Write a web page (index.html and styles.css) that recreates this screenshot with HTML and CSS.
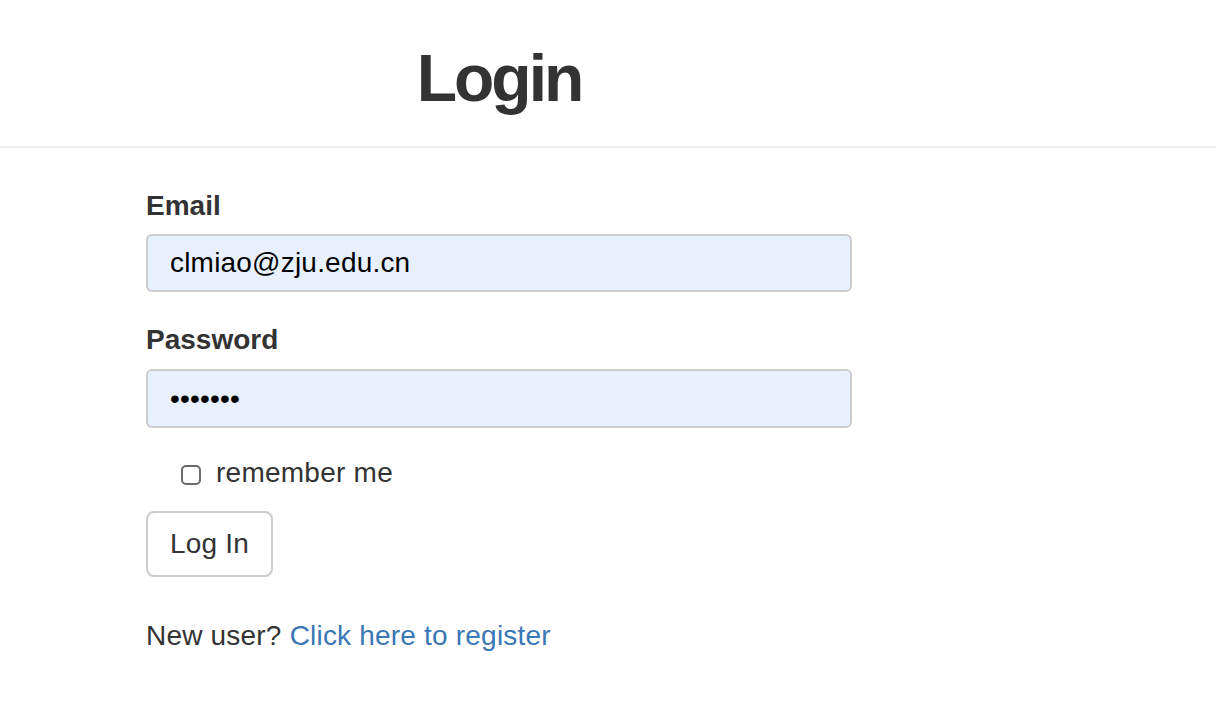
FILE: index.html
```html
<!DOCTYPE html>
<html lang="en">
<head>
<meta charset="utf-8">
<title>Login</title>
<link rel="stylesheet" href="styles.css">
</head>
<body>
<header class="page-header">
  <div class="column">
    <h1 class="title">Login</h1>
  </div>
</header>
<main class="column form-area">
  <form class="login-form" action="#" onsubmit="return false;">
    <div class="field">
      <label class="field-label" for="email">Email</label>
      <input class="field-input" id="email" type="text" value="clmiao@zju.edu.cn">
    </div>
    <div class="field">
      <label class="field-label" for="password">Password</label>
      <input class="field-input" id="password" type="password" value="1234567">
    </div>
    <label class="remember">
      <input class="remember-box" type="checkbox">
      <span>remember me</span>
    </label>
    <button class="btn" type="submit">Log In</button>
  </form>
  <p class="register">New user? <a class="register-link" href="#">Click here to register</a></p>
</main>
</body>
</html>
```
FILE: styles.css
```css
html, body {
  margin: 0;
  padding: 0;
  background: #fff;
}
body {
  font-family: "Liberation Sans", Arial, sans-serif;
  font-size: 28px;
  line-height: 40px;
  color: #333;
}
.column {
  margin-left: 146px;
  width: 706px;
}
.page-header {
  padding-top: 38px;
  padding-bottom: 28px;
  border-bottom: 2px solid #eeeeee;
}
.title {
  margin: 0;
  text-align: center;
  font-size: 66px;
  line-height: 80px;
  font-weight: bold;
  letter-spacing: -3px;
  color: #333;
}
.form-area {
  padding-top: 38px;
}
.login-form {
  display: flex;
  flex-direction: column;
  align-items: flex-start;
}
.field {
  display: flex;
  flex-direction: column;
  width: 100%;
  margin-bottom: 28px;
}
.field-label {
  font-weight: bold;
  margin-bottom: 8px;
}
.field-input {
  box-sizing: border-box;
  width: 706px;
  height: 58px;
  padding: 0 22px;
  font-family: "Liberation Sans", Arial, sans-serif;
  font-size: 28px;
  letter-spacing: 0.2px;
  color: #000;
  background: #e8f0fe;
  border: 2px solid #cccccc;
  border-radius: 6px;
  outline: none;
}
#password {
  margin-top: 1px;
  height: 59px;
}
.remember {
  display: flex;
  align-items: center;
  gap: 15px;
  margin-left: 35px;
  margin-top: -3px;
  letter-spacing: 0.25px;
}
.remember-box {
  appearance: none;
  -webkit-appearance: none;
  box-sizing: border-box;
  width: 20px;
  height: 20px;
  margin: 3px 0 0 0;
  border: 2px solid #6b6b6b;
  border-radius: 5px;
  background: #fff;
}
.btn {
  margin-top: 18px;
  box-sizing: border-box;
  height: 66px;
  padding: 11px 22px;
  font-family: "Liberation Sans", Arial, sans-serif;
  font-size: 28px;
  line-height: 40px;
  letter-spacing: 0.2px;
  color: #333;
  background: #fff;
  border: 2px solid #cccccc;
  border-radius: 8px;
}
.register {
  margin: 39px 0 0 0;
  letter-spacing: 0.2px;
}
.register-link {
  color: #3a77b5;
  text-decoration: none;
}
```
